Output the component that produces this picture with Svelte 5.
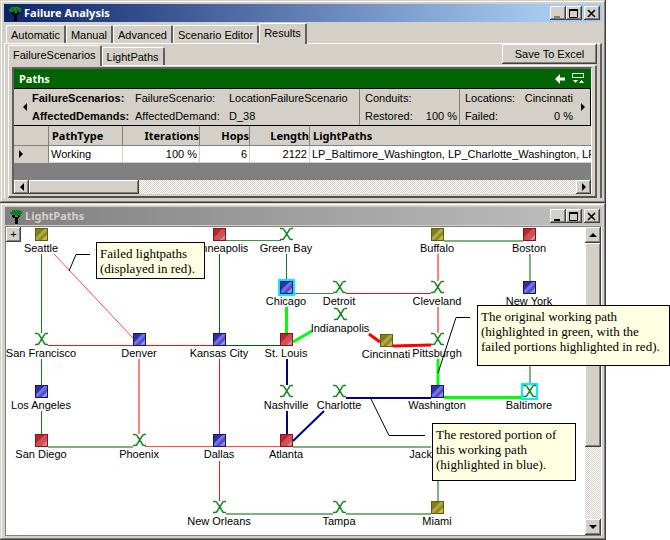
<script>
  const tabs = ['Automatic', 'Manual', 'Advanced', 'Scenario Editor', 'Results'];
  const subTabs = ['FailureScenarios', 'LightPaths'];
  let activeTab = $state('Results');
  let activeSub = $state('FailureScenarios');

  const palette = {
    red: ['#8b1018', '#b02830', '#e04850', '#c05860', '#e09090'],
    blue: ['#101080', '#3030a0', '#7070e8', '#5050b8', '#a0a0e8'],
    gold: ['#606000', '#808018', '#b0a848', '#908820', '#d0c860']
  };

  // x, y: centre of the symbol on the map
  const nodes = [
    { name: 'Seattle', x: 35, y: 7, kind: 'gold' },
    { name: 'Minneapolis', x: 213, y: 7, kind: 'red' },
    { name: 'Green Bay', x: 280, y: 7, kind: 'cross' },
    { name: 'Buffalo', x: 431, y: 7, kind: 'gold' },
    { name: 'Boston', x: 523, y: 7, kind: 'red' },
    { name: 'Chicago', x: 280, y: 60, kind: 'blue', picked: true },
    { name: 'Detroit', x: 333, y: 60, kind: 'cross' },
    { name: 'Cleveland', x: 431, y: 60, kind: 'cross' },
    { name: 'New York', x: 523, y: 60, kind: 'blue' },
    { name: 'Indianapolis', x: 334, y: 87, kind: 'cross' },
    { name: 'San Francisco', x: 35, y: 112, kind: 'cross' },
    { name: 'Denver', x: 133, y: 112, kind: 'blue' },
    { name: 'Kansas City', x: 213, y: 112, kind: 'blue' },
    { name: 'St. Louis', x: 280, y: 112, kind: 'red' },
    { name: 'Cincinnati', x: 380, y: 113, kind: 'gold' },
    { name: 'Pittsburgh', x: 431, y: 112, kind: 'cross' },
    { name: 'Los Angeles', x: 35, y: 164, kind: 'blue' },
    { name: 'Nashville', x: 280, y: 164, kind: 'cross' },
    { name: 'Charlotte', x: 333, y: 164, kind: 'cross' },
    { name: 'Washington', x: 431, y: 164, kind: 'blue' },
    { name: 'Baltimore', x: 523, y: 164, kind: 'cross', picked: true },
    { name: 'San Diego', x: 35, y: 213, kind: 'red' },
    { name: 'Phoenix', x: 133, y: 213, kind: 'cross' },
    { name: 'Dallas', x: 213, y: 213, kind: 'blue' },
    { name: 'Atlanta', x: 280, y: 213, kind: 'red' },
    { name: 'Jacksonville', x: 433, y: 213, kind: 'cross' },
    { name: 'New Orleans', x: 213, y: 280, kind: 'cross' },
    { name: 'Tampa', x: 333, y: 280, kind: 'cross' },
    { name: 'Miami', x: 431, y: 280, kind: 'gold' }
  ];

  // x1, y1, x2, y2, style
  const links = [
    [35.5, 27, 35.5, 106, 'ok'], [35.5, 132, 35.5, 158, 'ok'], [35.5, 184, 35.5, 207, 'ok'],
    [48, 27, 127, 111, 'failsoft'], [42, 118.5, 127, 118.5, 'fail'], [139, 118.5, 207, 118.5, 'fail'],
    [219, 118.5, 274, 118.5, 'dark'], [213.5, 27, 213.5, 106, 'dark'], [213.5, 132, 213.5, 207, 'fail'],
    [133, 132, 133, 207, 'failpale'], [220, 13.5, 275, 13.5, 'oksoft'], [280.5, 27, 280.5, 52, 'ok'],
    [289, 66.5, 327, 66.5, 'oksoft'], [340, 66.5, 425, 66.5, 'fail'],
    [42, 220, 127, 220, 'okpale'], [139, 219.5, 207, 219.5, 'failsoft'], [220, 219.5, 274, 219.5, 'failsoft'],
    [287, 220, 425, 220, 'okpale'], [213.5, 234, 213.5, 274, 'fail'], [432, 234, 432, 274, 'okpale'],
    [220, 287, 327, 287, 'okpale'], [340, 287, 425, 287, 'okpale'],
    [438, 14, 517, 14, 'okpale'], [432, 27, 432, 54, 'failpale'], [432, 80, 432, 106, 'failpale'],
    [524, 27, 524, 54, 'okpale'], [524, 80, 524, 156, 'okpale'],
    [280.5, 80, 280.5, 106, 'work'], [287, 115, 306, 104, 'work'], [432, 132, 432, 158, 'work'],
    [438, 170.5, 515, 170.5, 'work'], [363, 107, 374, 115, 'lost'], [387, 119, 425, 118, 'lost'],
    [281, 132, 281, 158, 'restored'], [281, 184, 281, 207, 'restored'], [318, 184, 287, 214, 'restored'],
    [340, 171, 425, 171, 'restored']
  ];
</script>

{#snippet tree()}
  <svg class="tree" width="14" height="15" viewBox="0 0 14 15" aria-hidden="true">
    <path d="M4 6h2v2h3V6h2v2h-1v1H9v6H6V9H4V8H3V6z" fill="#000" />
    <path d="M4 1h7v1h2v3h-1v1h-2V5H9v2H7V5H5v1H2V5H1V3h2V1z" fill="#0b8a1a" />
    <path d="M4 3.500h2M8 2.500h1M9 4.500h2M6 5.500h1" stroke="#003808" fill="none" />
  </svg>
{/snippet}

{#snippet titlebar(title, idle)}
  <header class="title" class:idle>
    {@render tree()}
    <h1>{title}</h1>
    <button class="cap" aria-label="Minimize">
      <svg width="12" height="11"><path d="M2 9h6" stroke={idle ? '#000' : '#808080'} stroke-width="2" /></svg>
    </button>
    <button class="cap" aria-label="Maximize">
      <svg width="12" height="11"><path d="M1.500 2v7.500h8V2" fill="none" stroke="#000" /><path d="M1 2h9" stroke="#000" stroke-width="2" /></svg>
    </button>
    <button class="cap close" aria-label="Close">
      <svg width="12" height="11"><path d="M2 2l7 7M9 2l-7 7" stroke="#000" stroke-width="1.600" /></svg>
    </button>
  </header>
{/snippet}

{#snippet arrow(dir)}
  <svg width="8" height="8" viewBox="0 0 8 8" aria-hidden="true">
    <path
      d={{ left: 'M6 0v8L2 4z', right: 'M2 0v8l4-4z', up: 'M0 6h8L4 2z', down: 'M0 2h8L4 6z' }[dir]}
      fill="#000"
    />
  </svg>
{/snippet}

<main>
  <section class="window">
    {@render titlebar('Failure Analysis', false)}
    <div class="tabs" role="tablist">
      {#each tabs as t}
        <button role="tab" class="tab" class:on={t === activeTab} aria-selected={t === activeTab} onclick={() => (activeTab = t)}>{t}</button>
      {/each}
    </div>
    <div class="panel outer">
      <div class="subrow">
        <div class="tabs sub" role="tablist">
          {#each subTabs as t}
            <button role="tab" class="tab" class:on={t === activeSub} aria-selected={t === activeSub} onclick={() => (activeSub = t)}>{t}</button>
          {/each}
        </div>
        <button class="save">Save To Excel</button>
      </div>
      <div class="panel inner">
        <div class="grid">
          <div class="caption">
            <h2>Paths</h2>
            <button class="bare" aria-label="Back">
              <svg width="10" height="10"><path d="M5 0v3.500h5v3H5V10L0 5z" fill="#fff" /></svg>
            </button>
            <button class="bare" aria-label="Parent rows">
              <svg width="13" height="11"><path d="M.5.5h11v4H.5z" fill="none" stroke="#fff" /><path d="M1 7h5L3.500 10zM7 10h5L9.500 7z" fill="#fff" /></svg>
            </button>
          </div>
          <div class="band">
            <button class="bare step" aria-label="Scroll left">{@render arrow('left')}</button>
            <div class="names"><b>FailureScenarios:</b><b>AffectedDemands:</b></div>
            <div class="keys"><span>FailureScenario:</span><span>AffectedDemand:</span></div>
            <div class="vals"><span>LocationFailureScenario</span><span>D_38</span></div>
            <div class="pair">
              <p><span>Conduits:</span></p>
              <p><span>Restored:</span><span>100 %</span></p>
            </div>
            <div class="pair last">
              <p><span>Locations:</span><span>Cincinnati</span></p>
              <p><span>Failed:</span><span>0 %</span></p>
            </div>
            <button class="bare step" aria-label="Scroll right">{@render arrow('right')}</button>
          </div>
          <table>
            <colgroup><col class="c0" /><col class="c1" /><col class="c2" /><col class="c3" /><col class="c4" /><col /></colgroup>
            <thead>
              <tr><th></th><th>PathType</th><th class="num">Iterations</th><th class="num">Hops</th><th class="num">Length</th><th>LightPaths</th></tr>
            </thead>
            <tbody>
              <tr>
                <td class="rowhead">{@render arrow('right')}</td>
                <td>Working</td><td class="num">100 %</td><td class="num">6</td><td class="num">2122</td>
                <td>LP_Baltimore_Washington, LP_Charlotte_Washington, LP</td>
              </tr>
            </tbody>
          </table>
          <div class="blank"></div>
          <div class="hscroll">
            <button class="raised" aria-label="Left">{@render arrow('left')}</button>
            <div class="raised hthumb"></div>
            <div class="fill"></div>
            <button class="raised" aria-label="Right">{@render arrow('right')}</button>
          </div>
        </div>
      </div>
    </div>
  </section>

  <section class="window second">
    {@render titlebar('LightPaths', true)}
    <div class="client">
      <div class="map">
        <svg class="net" width="578" height="308">
          <defs>
            {#each Object.entries(palette) as [kind, c]}
              <linearGradient id={kind} x1="0" y1="0" x2="1" y2="1">
                <stop offset="0" stop-color={c[1]} /><stop offset=".36" stop-color={c[1]} />
                <stop offset=".42" stop-color={c[2]} /><stop offset=".54" stop-color={c[2]} />
                <stop offset=".6" stop-color={c[3]} /><stop offset=".7" stop-color={c[3]} />
                <stop offset=".8" stop-color={c[4]} /><stop offset="1" stop-color={c[3]} />
              </linearGradient>
            {/each}
          </defs>
          {#each links as [x1, y1, x2, y2, kind]}
            <line {x1} {y1} {x2} {y2} class={kind} />
          {/each}
          {#each nodes as n}
            <g transform="translate({n.x} {n.y})">
              {#if n.picked}
                <rect x="-7" y="-7" width="15" height="15" fill="#fff" stroke="#00f0ff" stroke-width="2" />
              {/if}
              {#if n.kind === 'cross'}
                <path d="M-6-5.500h2q2 0 2.500 2L3 3.500q.5 2 2 2H7M7-5.500H5q-1.500 0-2 2L-1.500 3.500q-.5 2-2.500 2h-2" fill="none" stroke="#128a1c" stroke-width="1.500" />
              {:else}
                <rect x="-5.500" y="-5.500" width="12" height="12" fill="url(#{n.kind})" stroke={palette[n.kind][0]} />
              {/if}
              <text y="18" text-anchor="middle">{n.name}</text>
            </g>
          {/each}
          <g class="leader">
            <path d="M84 27.500H70L63 44" />
            <path d="M464 90.500H450L432 146" />
            <path d="M365 172L383 208.500H419" />
          </g>
        </svg>
        <button class="plus" aria-label="Expand">+</button>
        <p class="note failed">Failed lightpaths<br />(displayed in red).</p>
        <p class="note original">The original working path<br />(highlighted in green, with the<br />failed portions highlighted in red).</p>
        <p class="note fixed">The restored portion of<br />this working path<br />(highlighted in blue).</p>
      </div>
      <div class="vscroll">
        <button class="raised" aria-label="Up">{@render arrow('up')}</button>
        <div class="raised vthumb"></div>
        <div class="fill"></div>
        <button class="raised" aria-label="Down">{@render arrow('down')}</button>
      </div>
    </div>
  </section>
</main>

<style>
  :global(body) { background: #fff; }
  main {
    margin-right: 64px;
    font: 11px/14px "Liberation Sans", Arial, sans-serif;
    color: #000;
  }
  main :is(h1, h2, p) { margin: 0; }
  button { font: inherit; color: inherit; padding: 0; margin: 0; border: 0; border-radius: 0; background: #d4d0c8; }
  svg { display: block; flex: none; }
  .window {
    box-sizing: border-box;
    background: #d4d0c8;
    padding: 4px;
    box-shadow: inset -1px -1px #404040, inset 1px 1px #d4d0c8, inset -2px -2px #808080, inset 2px 2px #fff;
  }
  .window:first-child { padding-bottom: 5px; }
  .title {
    display: flex;
    align-items: center;
    height: 18px;
    padding: 0 2px 0 3px;
    background: linear-gradient(90deg, #0a246a, #a6caf0 90%);
    color: #fff;
  }
  .title.idle { background: linear-gradient(90deg, #808080, #c0c0c0); color: #d4d0c8; }
  h1, h2, th { font: bold 11px/16px "Noto Sans", sans-serif; }
  .title h1 { flex: 1; padding-left: 2px; }
  .cap, .raised, .save, .plus {
    box-shadow: inset -1px -1px #404040, inset 1px 1px #fff, inset -2px -2px #808080;
  }
  .tree { margin-left: 1px; }
  .cap { width: 16px; height: 14px; padding: 1px 0 0 2px; }
  .close { margin-left: 2px; }
  .tabs { display: flex; align-items: flex-end; height: 21px; padding-left: 2px; }
  .tab {
    height: 18px;
    padding: 0 4px;
    border-top: 1px solid #fff;
    border-left: 1px solid #fff;
    border-right: 2px solid #606060;
    border-radius: 2px 2px 0 0;
    white-space: nowrap;
  }
  .tab.on { height: 21px; padding-bottom: 3px; margin-bottom: -1px; position: relative; }
  .panel { border: 1px solid #fff; border-right: 2px solid #606060; }
  .outer { border-bottom: 0; padding: 0 3px; }
  .subrow { display: flex; justify-content: space-between; align-items: flex-start; height: 21px; }
  .sub { padding-left: 0; }
  .save { width: 95px; height: 20px; }
  .inner { border-bottom: 2px solid #505050; padding: 1px 3px 2px; }
  .grid { border: 2px solid #606060; border-right: 1px solid #fff; border-bottom: 0; overflow: hidden; background: #808080; }
  .caption { display: flex; align-items: center; gap: 7px; height: 19px; padding: 0 6px 0 5px; background: #006400; color: #fff; }
  h2 { flex: 1; }
  .bare { background: none; display: flex; align-items: center; justify-content: center; }
  .band { display: flex; height: 36px; padding-left: 3px; border: 1px solid #000; border-left: 0; background: #d4d0c8; line-height: 18px; }
  .band span, .band b { display: block; white-space: nowrap; }
  .step { width: 15px; }
  .names { width: 103px; }
  .keys { width: 94px; }
  .vals { flex: 1; }
  .pair { width: 92px; padding: 0 2px 0 5px; border-left: 1px solid #808080; }
  .pair.last { width: 108px; }
  .pair p { display: flex; justify-content: space-between; }
  table { table-layout: fixed; width: 100%; border-collapse: separate; border-spacing: 0; background: #d4d0c8; }
  .c0 { width: 35px; }
  .c1 { width: 74px; }
  .c2 { width: 77px; }
  .c3 { width: 50px; }
  .c4 { width: 60px; }
  th { height: 19px; padding: 0 0 0 3px; text-align: left; border-bottom: 1px solid #808080; border-right: 1px solid #808080; }
  td { height: 16px; padding: 0 2px; background: #fff; border-right: 1px solid #d4d0c8; border-bottom: 1px solid #d4d0c8; white-space: nowrap; overflow: hidden; }
  th:last-child, td:last-child { border-right: 0; }
  td:last-child { padding-right: 0; }
  .num { text-align: right; }
  th.num { padding: 0; }
  .rowhead { background: #d4d0c8; border-right-color: #808080; padding-left: 3px; }
  .blank { height: 17px; }
  .hscroll { display: flex; height: 14px; }
  .hscroll .raised, .vscroll .raised { display: flex; align-items: center; justify-content: center; flex: none; }
  .hscroll button { width: 15px; }
  .hthumb { width: 110px; }
  .raised { background: #d4d0c8; }
  .hscroll, .vscroll { background: repeating-conic-gradient(#fff 0 25%, #d4d0c8 0 50%) 0 0 / 2px 2px; }
  .fill { flex: 1; }
  .client { display: flex; border: 1px solid #808080; border-right-color: #fff; background: #fff; }
  .second .title { margin: 0 0 1px 1px; }
  .second .client { margin-left: 1px; }
  .map { position: relative; flex: 1; min-width: 0; height: 308px; }
  .net { overflow: visible; }
  .net text { font-size: 11px; }
  .ok { stroke: #108018; }
  .oksoft { stroke: #409040; }
  .okpale { stroke: #80b080; stroke-width: 2; }
  .dark { stroke: #006400; }
  .fail { stroke: #ff1010; }
  .failsoft { stroke: #ff4848; }
  .failpale { stroke: #ff8080; stroke-width: 2; }
  .work { stroke: #0f0; stroke-width: 3; }
  .lost { stroke: #f00; stroke-width: 3; }
  .restored { stroke: #000088; stroke-width: 2; }
  .leader { fill: none; stroke: #000; }
  .plus { position: absolute; left: 0; top: 0; width: 15px; height: 15px; line-height: 13px; }
  .note {
    position: absolute;
    box-sizing: border-box;
    z-index: 1;
    padding: 3px;
    background: #ffffe1;
    border: 1px solid #000;
    font: 13px/15px "Liberation Serif", "Times New Roman", serif;
    white-space: nowrap;
  }
  .failed { left: 90px; top: 15px; width: 109px; height: 37px; }
  .original { left: 471px; top: 78px; width: 193px; height: 61px; }
  .fixed { left: 426px; top: 196px; width: 144px; height: 58px; }
  .vscroll { display: flex; flex-direction: column; width: 16px; }
  .vscroll button { height: 16px; }
  .vthumb { height: 204px; }
</style>
